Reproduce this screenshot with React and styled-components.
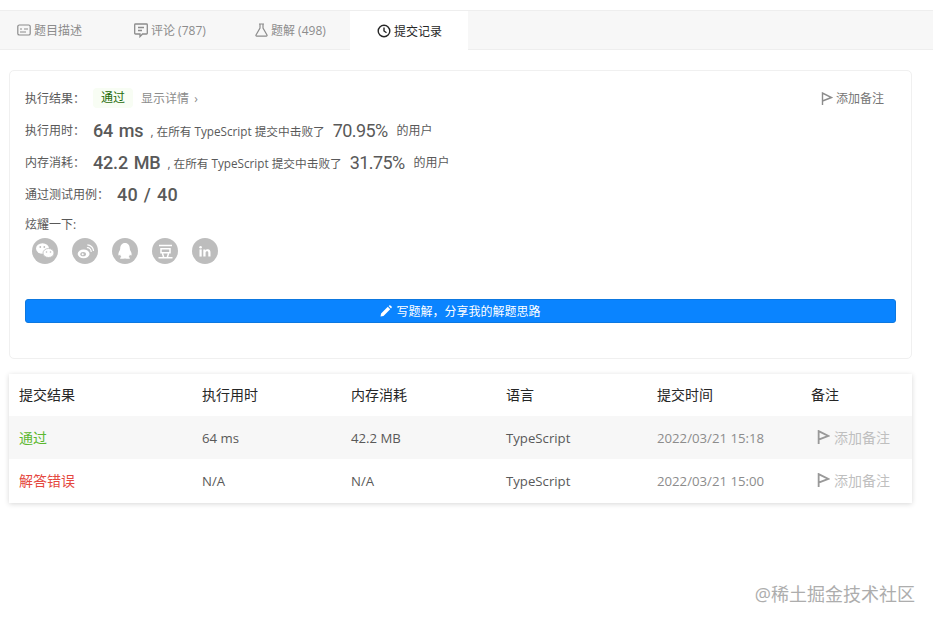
import React from 'react';
import styled, { createGlobalStyle } from 'styled-components';

const SANS = '"Open Sans", "Noto Sans CJK SC", sans-serif';

const GlobalStyle = createGlobalStyle`
  html, body {
    margin: 0;
    padding: 0;
    background: #fff;
    font-family: ${SANS};
  }
`;

const TABS = [
  { name: 'desc', label: '题目描述', width: 110, pad: 17 },
  { name: 'comment', label: '评论 (787)', width: 120, pad: 24 },
  { name: 'solution', label: '题解 (498)', width: 120, pad: 25 },
  { name: 'history', label: '提交记录', width: 118, pad: 27, active: true },
];

const ROWS = [
  { status: '通过', ok: true, time: '64 ms', memory: '42.2 MB', lang: 'TypeScript', at: '2022/03/21 15:18' },
  { status: '解答错误', ok: false, time: 'N/A', memory: 'N/A', lang: 'TypeScript', at: '2022/03/21 15:00' },
];

const HEADERS = ['提交结果', '执行用时', '内存消耗', '语言', '提交时间', '备注'];

function TabIcon({ name }) {
  if (name === 'desc') {
    return (
      <svg width="14" height="14" viewBox="0 0 14 14" fill="none" stroke="#8c8c8c" strokeWidth="1.2">
        <rect x="0.8" y="2" width="12.4" height="10" rx="1.6" />
        <path d="M3 6h2M3 9h6M7 6h4" />
      </svg>
    );
  }
  if (name === 'comment') {
    return (
      <svg width="14" height="15" viewBox="0 0 14 15" fill="none" stroke="#8c8c8c" strokeWidth="1.3">
        <path d="M1.500 1h11a.8.8 0 0 1 .8.8v8.400a.8.8 0 0 1-.8.8H8.500L6 13.600V11H1.500a.8.8 0 0 1-.8-.8V1.800a.8.8 0 0 1 .8-.8z" />
        <path d="M4 4.500h6M4 7.500h4" />
      </svg>
    );
  }
  if (name === 'solution') {
    return (
      <svg width="13" height="14" viewBox="0 0 13 14" fill="none" stroke="#8c8c8c" strokeWidth="1.2">
        <path d="M4 1h5M5 1v4L1 12a.8.8 0 0 0 .7 1.200h9.600A.8.8 0 0 0 12 12L8 5V1" />
      </svg>
    );
  }
  return (
    <svg width="14" height="14" viewBox="0 0 14 14" fill="none" stroke="#262626" strokeWidth="1.4">
      <circle cx="7" cy="7" r="5.800" />
      <path d="M7 3.500V7l2.500 1.800" />
    </svg>
  );
}

function FlagIcon({ size = 12, color = '#8c8c8c', weight = 1.4 }) {
  return (
    <svg width={size} height={size + 1} viewBox="0 0 12 13" fill="none" stroke={color} strokeWidth={weight}>
      <path d="M1.500 13V1L10.500 5.500L1.500 9" />
    </svg>
  );
}

function ShareIcon({ kind }) {
  const white = '#fff';
  const grey = '#bdbdbd';
  if (kind === 'wechat') {
    return (
      <svg width="18" height="16" viewBox="0 0 18 16" fill={white}>
        <ellipse cx="6.500" cy="5.500" rx="6.500" ry="5.200" />
        <ellipse cx="12.500" cy="10" rx="5.500" ry="4.500" stroke={grey} strokeWidth="0.8" />
        <circle cx="4.300" cy="4" r="0.900" fill={grey} />
        <circle cx="8.300" cy="4" r="0.900" fill={grey} />
        <circle cx="10.500" cy="9" r="0.800" fill={grey} />
        <circle cx="14.500" cy="9" r="0.800" fill={grey} />
      </svg>
    );
  }
  if (kind === 'weibo') {
    return (
      <svg width="17" height="15" viewBox="0 0 18 16" fill="none" stroke={white}>
        <ellipse cx="7" cy="10.500" rx="6.300" ry="4.600" fill={white} stroke="none" />
        <ellipse cx="6.500" cy="10.800" rx="3" ry="2.300" fill={grey} stroke="none" />
        <circle cx="6" cy="11" r="1.100" fill={white} stroke="none" />
        <path d="M10.500 4a4 4 0 0 1 4.500 4.500M11 1a6.500 6.500 0 0 1 6.500 6.500" strokeWidth="1.300" />
      </svg>
    );
  }
  if (kind === 'qq') {
    return (
      <svg width="16" height="17" viewBox="0 0 16 17" fill={white}>
        <path d="M8 0c3.200 0 4.800 2.500 4.800 5.500 0 1.200.6 2 1.300 3.500.8 1.800.6 3.500 0 3.500-.4 0-.9-.5-1.200-1.100-.2 1.100-.7 1.900-1.300 2.500 1 .4 1.500.9 1.300 1.500-.3.600-2.500.6-4.900 0-2.400.6-4.600.6-4.900 0-.2-.6.3-1.100 1.300-1.500-.6-.6-1.100-1.400-1.300-2.500-.3.600-.8 1.100-1.200 1.100-.6 0-.8-1.700 0-3.500.7-1.500 1.300-2.300 1.300-3.500C3.200 2.500 4.800 0 8 0z" />
      </svg>
    );
  }
  if (kind === 'douban') {
    return (
      <svg width="15" height="15" viewBox="0 0 15 15" fill="none" stroke={white} strokeWidth="1.500">
        <path d="M1 1.500h13M0.500 13.800h14M3 4.800h9v4H3zM4.500 9.500l1.200 4M10.500 9.500l-1.200 4" />
      </svg>
    );
  }
  return (
    <svg width="12" height="11" viewBox="0 0 14 13" fill={white}>
      <rect x="0.500" y="4" width="2.600" height="8.500" />
      <circle cx="1.800" cy="1.600" r="1.500" />
      <path d="M5 4h2.500v1.200C8 4.400 9 3.800 10.300 3.800c2.400 0 3.200 1.500 3.200 3.800v4.900h-2.600V8c0-1.100-.3-1.900-1.400-1.900-1.200 0-1.800.8-1.800 2v4.400H5z" />
    </svg>
  );
}

export default function App() {
  return (
    <Page>
      <GlobalStyle />
      <TabBar>
        {TABS.map(tab => (
          <Tab key={tab.name} $width={tab.width} $pad={tab.pad} $active={tab.active}>
            <TabIcon name={tab.name} />
            {tab.label}
          </Tab>
        ))}
      </TabBar>

      <Content>
        <ResultCard>
          <NoteLink>
            <FlagIcon color="#8c8c8c" />
            添加备注
          </NoteLink>

          <StatusRow>
            <Label>执行结果：</Label>
            <PassBadge>通过</PassBadge>
            <DetailLink>显示详情 ›</DetailLink>
          </StatusRow>

          <StatRow>
            <Label>执行用时：</Label>
            <BigValue>64 ms</BigValue>
            <Remark>, 在所有 TypeScript 提交中击败了</Remark>
            <BigValue $light>70.95%</BigValue>
            <Suffix>的用户</Suffix>
          </StatRow>

          <StatRow>
            <Label>内存消耗：</Label>
            <BigValue>42.2 MB</BigValue>
            <Remark>, 在所有 TypeScript 提交中击败了</Remark>
            <BigValue $light>31.75%</BigValue>
            <Suffix>的用户</Suffix>
          </StatRow>

          <StatRow>
            <Label>通过测试用例：</Label>
            <BigValue $wide>40 / 40</BigValue>
          </StatRow>

          <ShareTitle>炫耀一下:</ShareTitle>
          <ShareRow>
            {['wechat', 'weibo', 'qq', 'douban', 'linkedin'].map(kind => (
              <ShareButton key={kind}>
                <ShareIcon kind={kind} />
              </ShareButton>
            ))}
          </ShareRow>

          <WriteButton>
            <svg width="12" height="12" viewBox="0 0 12 12" fill="#fff">
              <path d="M0.500 11.500l.6-3L7.800 1.800l2.400 2.400-6.700 6.700zM8.600 1l.7-.6a.8.8 0 0 1 1.100 0l1.200 1.200a.8.8 0 0 1 0 1.100l-.6.7z" />
            </svg>
            写题解，分享我的解题思路
          </WriteButton>
        </ResultCard>

        <Table>
          <HeadRow>
            {HEADERS.map(head => (
              <HeadCell key={head}>{head}</HeadCell>
            ))}
          </HeadRow>
          {ROWS.map((row, index) => (
            <BodyRow key={row.at} $striped={index === 0}>
              <StatusCell $ok={row.ok}>{row.status}</StatusCell>
              <Cell>{row.time}</Cell>
              <Cell>{row.memory}</Cell>
              <Cell>{row.lang}</Cell>
              <DateCell>{row.at}</DateCell>
              <NoteCell>
                <FlagIcon size={13} color="#999" weight={1.7} />
                添加备注
              </NoteCell>
            </BodyRow>
          ))}
        </Table>
      </Content>

      <Watermark>@稀土掘金技术社区</Watermark>
    </Page>
  );
}

const Page = styled.div`
  position: relative;
  width: 933px;
  height: 623px;
  padding-top: 10px;
  box-sizing: border-box;
  overflow: hidden;
  background: #fff;
`;

const TabBar = styled.div`
  display: flex;
  height: 40px;
  box-sizing: border-box;
  background: #f7f7f7;
  border-top: 1px solid #eeeeee;
  border-bottom: 1px solid #eeeeee;
`;

const Tab = styled.div`
  display: flex;
  align-items: center;
  gap: 3px;
  width: ${props => props.$width}px;
  height: ${props => (props.$active ? '39px' : '38px')};
  padding-left: ${props => props.$pad}px;
  box-sizing: border-box;
  font-size: 12px;
  color: ${props => (props.$active ? '#262626' : '#8c8c8c')};
  background: ${props => (props.$active ? '#fff' : 'transparent')};
`;

const Content = styled.div`
  width: 903px;
  margin: 20px 0 0 9px;
`;

const ResultCard = styled.div`
  position: relative;
  height: 289px;
  padding: 17px 15px 0;
  box-sizing: border-box;
  border: 1px solid #f0f0f0;
  border-radius: 5px;
`;

const NoteLink = styled.div`
  position: absolute;
  top: 18px;
  right: 27px;
  display: flex;
  align-items: center;
  gap: 3px;
  font-size: 12px;
  color: #757575;
`;

const StatusRow = styled.div`
  display: flex;
  align-items: center;
  height: 20px;
  font-size: 12px;
`;

const Label = styled.span`
  font-size: 12px;
  color: #595959;
  margin-right: 8px;
`;

const PassBadge = styled.span`
  padding: 0 8px;
  line-height: 20px;
  margin-right: 8px;
  border-radius: 4px;
  font-size: 12px;
  color: #1f6b0a;
  background: #f8fdf4;
`;

const DetailLink = styled.span`
  font-size: 12px;
  word-spacing: 2px;
  color: #8c8c8c;
`;

const StatRow = styled.div`
  display: flex;
  align-items: center;
  height: 20px;
  margin-top: 12px;
`;

const BigValue = styled.span`
  font-family: Roboto, "Noto Sans", sans-serif;
  font-size: 18px;
  font-weight: ${props => (props.$light ? 400 : 500)};
  letter-spacing: ${props => (props.$wide ? '0.3px' : props.$light ? '-0.6px' : '-0.2px')};
  word-spacing: ${props => (props.$wide ? '1px' : '1.5px')};
  color: #595959;
  margin: 0 ${props => (props.$light ? '9px' : '7px')} 0 ${props => (props.$light ? '8px' : '0')};
`;

const Remark = styled.span`
  font-size: 11.7px;
  color: #595959;
  white-space: nowrap;
`;

const Suffix = styled.span`
  font-size: 12px;
  color: #595959;
`;

const ShareTitle = styled.div`
  margin-top: 12px;
  font-size: 12px;
  line-height: 17px;
  color: #595959;
`;

const ShareRow = styled.div`
  display: flex;
  gap: 14px;
  margin: 5px 0 0 7px;
`;

const ShareButton = styled.div`
  display: flex;
  align-items: center;
  justify-content: center;
  width: 26px;
  height: 26px;
  border-radius: 50%;
  background: #bdbdbd;
`;

const WriteButton = styled.div`
  display: flex;
  align-items: center;
  justify-content: center;
  gap: 4px;
  height: 24px;
  margin-top: 35px;
  box-sizing: border-box;
  border: 1px solid #0d78e0;
  border-radius: 3px;
  font-size: 12px;
  color: #fff;
  background: #0a84ff;
`;

const Table = styled.div`
  margin-top: 15px;
  padding-bottom: 1px;
  background: #fff;
  box-shadow: 0 1px 5px rgba(0, 0, 0, 0.16);
`;

const GRID = '183px 149px 155px 151px 154px 1fr';

const HeadRow = styled.div`
  display: grid;
  grid-template-columns: ${GRID};
  align-items: center;
  height: 42px;
`;

const HeadCell = styled.div`
  padding: 0 0 3px 10px;
  font-size: 14px;
  color: #262626;
`;

const BodyRow = styled.div`
  display: grid;
  grid-template-columns: ${GRID};
  align-items: center;
  height: 43px;
  background: ${props => (props.$striped ? '#f7f7f7' : '#fff')};
`;

const Cell = styled.div`
  padding-left: 10px;
  font-size: 13.2px;
  color: #595959;
`;

const StatusCell = styled(Cell)`
  padding-bottom: 2px;
  font-size: 14px;
  color: ${props => (props.$ok ? '#5cb82f' : '#e5493f')};
`;

const DateCell = styled(Cell)`
  color: #8c8c8c;
`;

const NoteCell = styled(Cell)`
  display: flex;
  align-items: center;
  gap: 4px;
  padding-left: 16px;
  padding-bottom: 1px;
  font-size: 14px;
  color: #bfbfbf;
`;

const Watermark = styled.div`
  position: absolute;
  right: 18px;
  top: 583px;
  font-size: 18px;
  line-height: 22px;
  color: #adadad;
`;
